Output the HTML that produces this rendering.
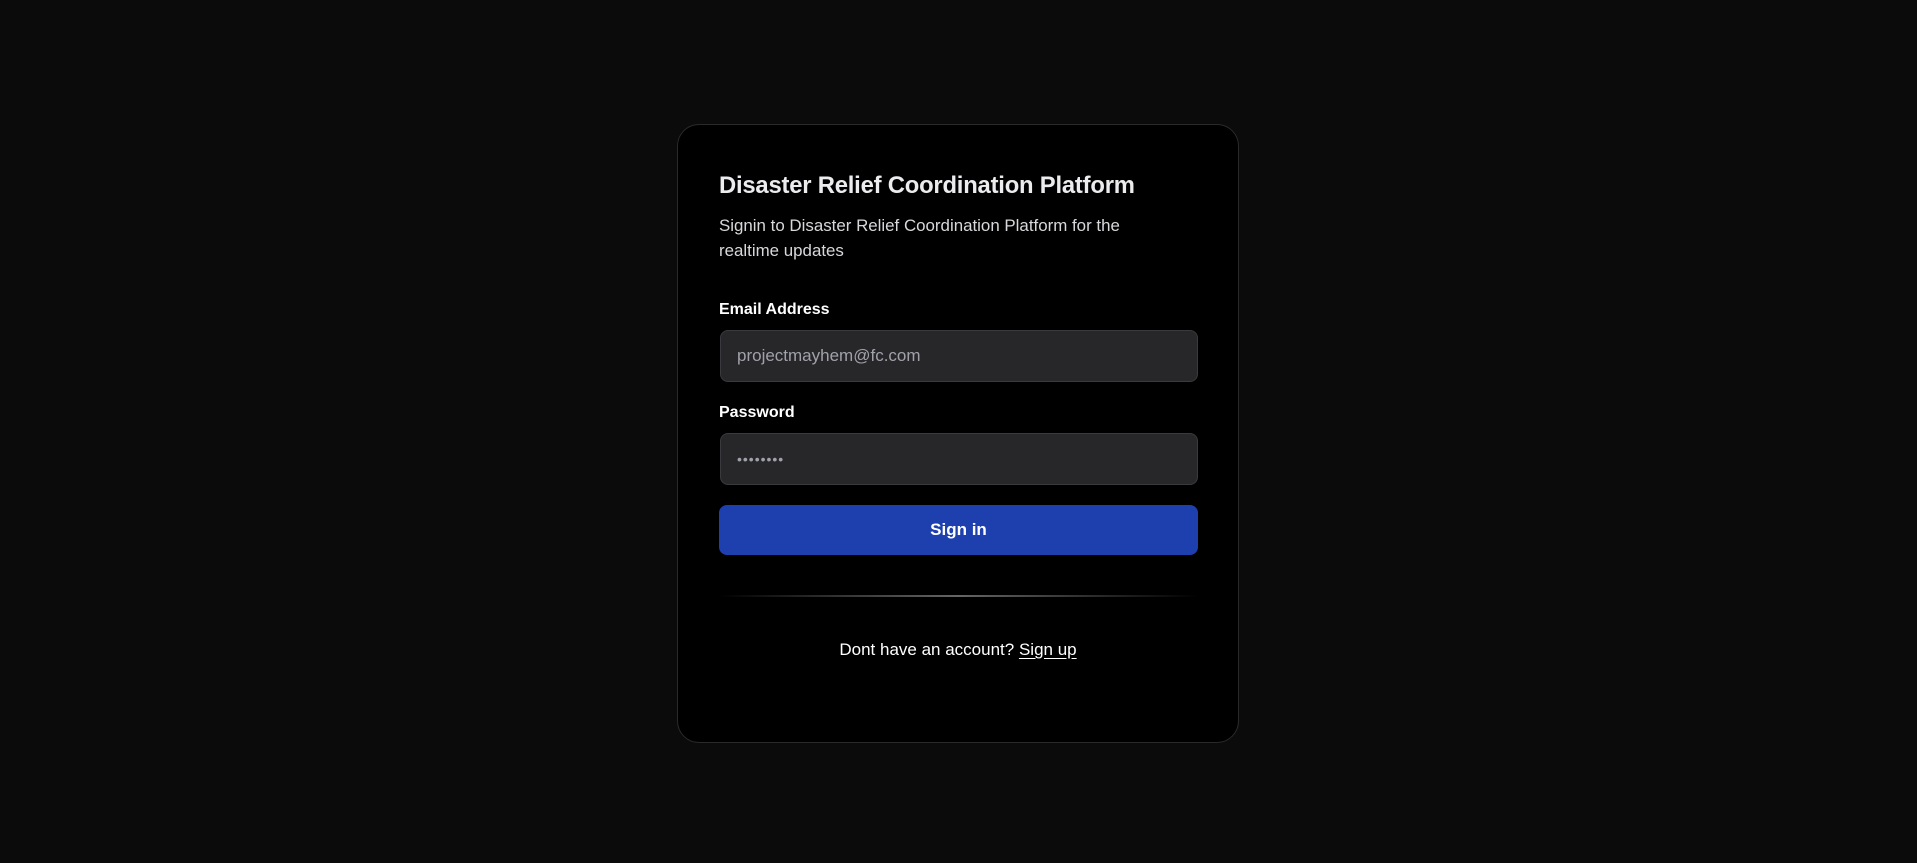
<!DOCTYPE html>
<html><head><meta charset="utf-8"><style>
*{box-sizing:border-box;margin:0;padding:0}
html,body{width:1917px;height:863px;background:#0b0b0b;font-family:"Liberation Sans",sans-serif;overflow:hidden}
.card{position:absolute;left:677px;top:124px;width:562px;height:619px;background:#000;border:1px solid #2a2a2a;border-radius:22px}
.t{position:absolute;left:41px;top:47px;font-size:23.8px;font-weight:bold;color:#ececef;white-space:nowrap;letter-spacing:-0.2px}
.s{position:absolute;left:41px;top:88px;font-size:16.9px;line-height:25px;color:#d8d8dc;white-space:nowrap}
.l{position:absolute;left:41px;font-size:16px;font-weight:bold;color:#fff}
.i{position:absolute;left:42px;width:478px;height:52px;background:#27272a;border:1px solid #3a3a3e;border-radius:8px;color:#a1a1aa;font-size:17px;padding-left:16px;line-height:50px}
.b{position:absolute;left:41px;top:380px;width:479px;height:50px;background:#1e40af;border-radius:8px;color:#fff;font-weight:bold;font-size:17px;text-align:center;line-height:50px}
.d{position:absolute;left:41px;top:470px;width:479px;height:2px;background:linear-gradient(90deg,transparent,#666,transparent)}
.f{position:absolute;left:0;width:100%;top:515px;text-align:center;color:#fff;font-size:17px}
.f u{text-underline-offset:3px}
</style></head><body>
<div class="card">
<div class="t">Disaster Relief Coordination Platform</div>
<div class="s">Signin to Disaster Relief Coordination Platform for the<br>realtime updates</div>
<div class="l" style="top:176px">Email Address</div>
<div class="i" style="top:205px">projectmayhem@fc.com</div>
<div class="l" style="top:279px">Password</div>
<div class="i" style="top:308px;letter-spacing:1px;font-size:14px">••••••••</div>
<div class="b">Sign in</div>
<div class="d"></div>
<div class="f">Dont have an account? <u>Sign up</u></div>
</div>
</body></html>
